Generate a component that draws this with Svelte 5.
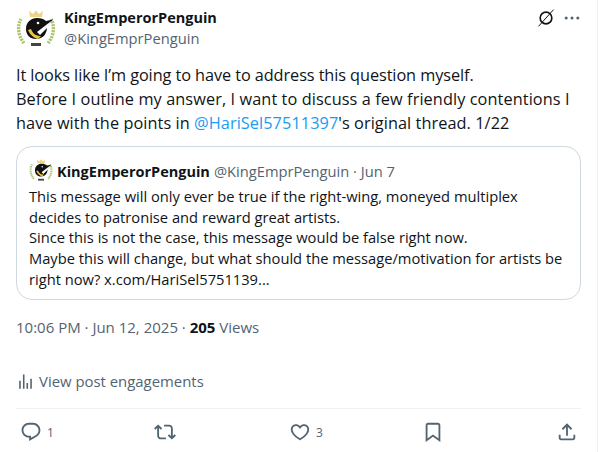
<script>
  const actions = [
    { id: 'reply', count: '1', d: 'M1.751 10c0-4.42 3.584-8 8.005-8h4.366c4.49 0 8.129 3.64 8.129 8.13 0 2.96-1.607 5.68-4.196 7.11l-8.054 4.46v-3.69h-.067c-4.49.1-8.183-3.51-8.183-8.01zm8.005-6c-3.317 0-6.005 2.69-6.005 6 0 3.37 2.77 6.08 6.138 6.01l.351-.01h1.761v2.3l5.087-2.81c1.951-1.08 3.163-3.13 3.163-5.36 0-3.39-2.744-6.13-6.129-6.13H9.756z' },
    { id: 'rt', count: '', d: 'M4.5 3.88l4.432 4.14-1.364 1.46L5.5 7.55V16c0 1.1.896 2 2 2H13v2H7.5c-2.209 0-4-1.79-4-4V7.55L1.432 9.48.068 8.02 4.5 3.88zM16.5 6H11V4h5.5c2.209 0 4 1.79 4 4v8.45l2.068-1.93 1.364 1.46-4.432 4.14-4.432-4.14 1.364-1.46 2.068 1.93V8c0-1.1-.896-2-2-2z' },
    { id: 'like', count: '3', d: 'M16.697 5.5c-1.222-.06-2.679.51-3.89 2.16l-.805 1.09-.806-1.09C9.984 6.01 8.526 5.44 7.304 5.5c-1.243.07-2.349.78-2.91 1.91-.552 1.12-.633 2.78.479 4.82 1.074 1.97 3.257 4.27 7.129 6.61 3.87-2.34 6.052-4.64 7.126-6.61 1.111-2.04 1.03-3.7.477-4.82-.561-1.13-1.666-1.84-2.908-1.91zm4.187 7.69c-1.351 2.48-4.001 5.12-8.379 7.67l-.503.3-.504-.3c-4.379-2.55-7.029-5.19-8.382-7.67-1.36-2.5-1.41-4.86-.514-6.67.887-1.79 2.647-2.91 4.601-3.01 1.651-.09 3.368.56 4.798 2.01 1.429-1.45 3.146-2.1 4.796-2.01 1.954.1 3.714 1.22 4.601 3.01.896 1.81.846 4.17-.514 6.67z' },
    { id: 'mark', count: '', d: 'M4 4.5C4 3.12 5.119 2 6.5 2h11C18.881 2 20 3.12 20 4.5v18.44l-8-5.71-8 5.71V4.5zM6.5 4c-.276 0-.5.22-.5.5v14.56l6-4.29 6 4.29V4.5c0-.28-.224-.5-.5-.5h-11z' },
    { id: 'share', count: '', d: 'M12 2.59l5.7 5.7-1.41 1.42L13 6.41V16h-2V6.41l-3.3 3.3-1.41-1.42L12 2.59zM21 15l-.02 3.51c0 1.38-1.12 2.49-2.5 2.49H5.5C4.11 21 3 19.88 3 18.5V15h2v3.5c0 .28.22.5.5.5h12.98c.28 0 .5-.22.5-.5L19 15h2z' }
  ];
</script>

{#snippet avatar(size)}
  <svg class="avatar" width={size} height={size} viewBox="0 0 40 40" aria-hidden="true">
    <path d="M8 33 C2 26 1 16 5 9" fill="none" stroke="#a9c46c" stroke-width="3.4" stroke-dasharray="2 1"/>
    <path d="M32 33 C38 26 39 16 35 9" fill="none" stroke="#a9c46c" stroke-width="3.4" stroke-dasharray="2 1"/>
    <path d="M14 7 L13 1 L17 4 L20 0.500 L23 4 L27 1 L26 7 Z" fill="#ecd488"/>
    <path d="M10 19 C10 12 15 8 21 8 C25 8 28 9 30 11 L37 9.500 L31 17 C31 24 27 29 20 29 C14 29 10 25 10 19 Z" fill="#111"/>
    <path d="M21 22 L36 10.500 L31 18 L24 25 Z" fill="#fff"/>
    <path d="M12 20 C14 25 18 28 22 29 L25 26 C20 26 17 24 15 19 Z" fill="#eac43e"/>
    <circle cx="22" cy="13" r="1.300" fill="#fff"/>
    <rect x="15" y="33" width="10" height="3" fill="#444"/>
  </svg>
{/snippet}

<main class="post">
  <header class="head">
    {@render avatar(40)}
    <div class="who">
      <div class="name">KingEmperorPenguin</div>
      <div class="handle">@KingEmprPenguin</div>
    </div>
    <div class="tools">
      <svg class="grok" viewBox="0 0 24 24" width="20" height="20" aria-hidden="true">
        <circle cx="12" cy="12" r="7" fill="none" stroke="#0f1419" stroke-width="2"/>
        <path d="M3 22 L21 2" stroke="#0f1419" stroke-width="1.200"/>
      </svg>
      <svg class="more" viewBox="0 0 24 24" width="20" height="20" aria-hidden="true">
        <circle cx="5" cy="12" r="1.800" fill="#536471"/><circle cx="12" cy="12" r="1.800" fill="#536471"/><circle cx="19" cy="12" r="1.800" fill="#536471"/>
      </svg>
    </div>
  </header>

  <p class="body"><span class="l1">It looks like I’m going to have to address this question myself.</span><br><span class="l2">Before I outline my answer, I want to discuss a few friendly contentions I</span><br><span class="l3">have with the points in <span class="link">@HariSel57511397</span>'s original thread. 1/22</span></p>

  <section class="quote">
    <div class="qhead">
      {@render avatar(24)}
      <span class="qname">KingEmperorPenguin</span>
      <span class="qmeta">@KingEmprPenguin · Jun 7</span>
    </div>
    <p class="qbody">This message will only ever be true if the right-wing, moneyed multiplex<br>decides to patronise and reward great artists.<br>Since this is not the case, this message would be false right now.<br>Maybe this will change, but what should the message/motivation for artists be<br>right now? x.com/HariSel5751139...</p>
  </section>

  <div class="time">10:06 PM · Jun 12, 2025 · <b>205</b> Views</div>
  <div class="engage">
    <svg viewBox="0 0 24 24" width="19" height="19" aria-hidden="true"><path fill="#536471" d="M8.75 21V3h2v18h-2zM18 21V8.5h2V21h-2zM4 21l.004-10h2L6 21H4zm9.248 0v-7h2v7h-2z"/></svg>
    <span>View post engagements</span>
  </div>
  <nav class="actions">
    {#each actions as a}
      <div class="action">
        <svg viewBox="0 0 24 24" width="22" height="22" aria-hidden="true"><path fill="#536471" d={a.d}/></svg>
        {#if a.count}<span>{a.count}</span>{/if}
      </div>
    {/each}
  </nav>
</main>

<style>
  :global(body) { margin: 0; background: #fff; }
  .post {
    width: 598px; height: 452px; box-sizing: border-box; padding: 8px 16px 0;
    border-right: 1px solid #eff3f4;
    font-family: "Open Sans", "Noto Sans", sans-serif; color: #0f1419; overflow: hidden;
  }
  .head { display: flex; align-items: flex-start; gap: 8px; height: 48px; }
  .avatar { flex: none; }
  .head .avatar { margin-top: 2px; }
  .who { flex: 1; line-height: 20px; }
  .name { font-size: 14.5px; font-weight: 700; }
  .handle { font-size: 14.7px; color: #536471; }
  .tools { display: flex; gap: 6px; margin-right: -1px; }
  .body { margin: 7px 0 0; font-size: 16.3px; line-height: 24px; white-space: nowrap; }
  .l1 { letter-spacing: -0.08px; }
  .l2 { letter-spacing: 0.09px; }
  .l3 { letter-spacing: 0.07px; }
  .link { color: #1d9bf0; }
  .quote { margin-top: 11px; border: 1px solid #cfd9de; border-radius: 16px; padding: 12px; height: 154px; box-sizing: border-box; }
  .qhead { display: flex; align-items: center; gap: 4px; height: 24px; font-size: 14.5px; }
  .qname { font-weight: 700; }
  .qmeta { color: #536471; font-size: 14.7px; }
  .qbody { margin: 3px 0 0; font-size: 14.7px; line-height: 20.7px; white-space: nowrap; }
  .time { margin-top: 17px; font-size: 15px; line-height: 20px; color: #536471; }
  .time b { color: #0f1419; }
  .engage { margin-top: 32px; display: flex; align-items: center; gap: 4px; font-size: 14.9px; color: #536471; height: 24px; }
  .actions { margin: 15px 0 0; padding: 12px 0 0 4px; border-top: 1px solid #eff3f4; display: grid; grid-template-columns: 134px 135px 133px 134px 22px; }
  .action { display: flex; align-items: center; gap: 5px; font-size: 12px; color: #536471; }
</style>
